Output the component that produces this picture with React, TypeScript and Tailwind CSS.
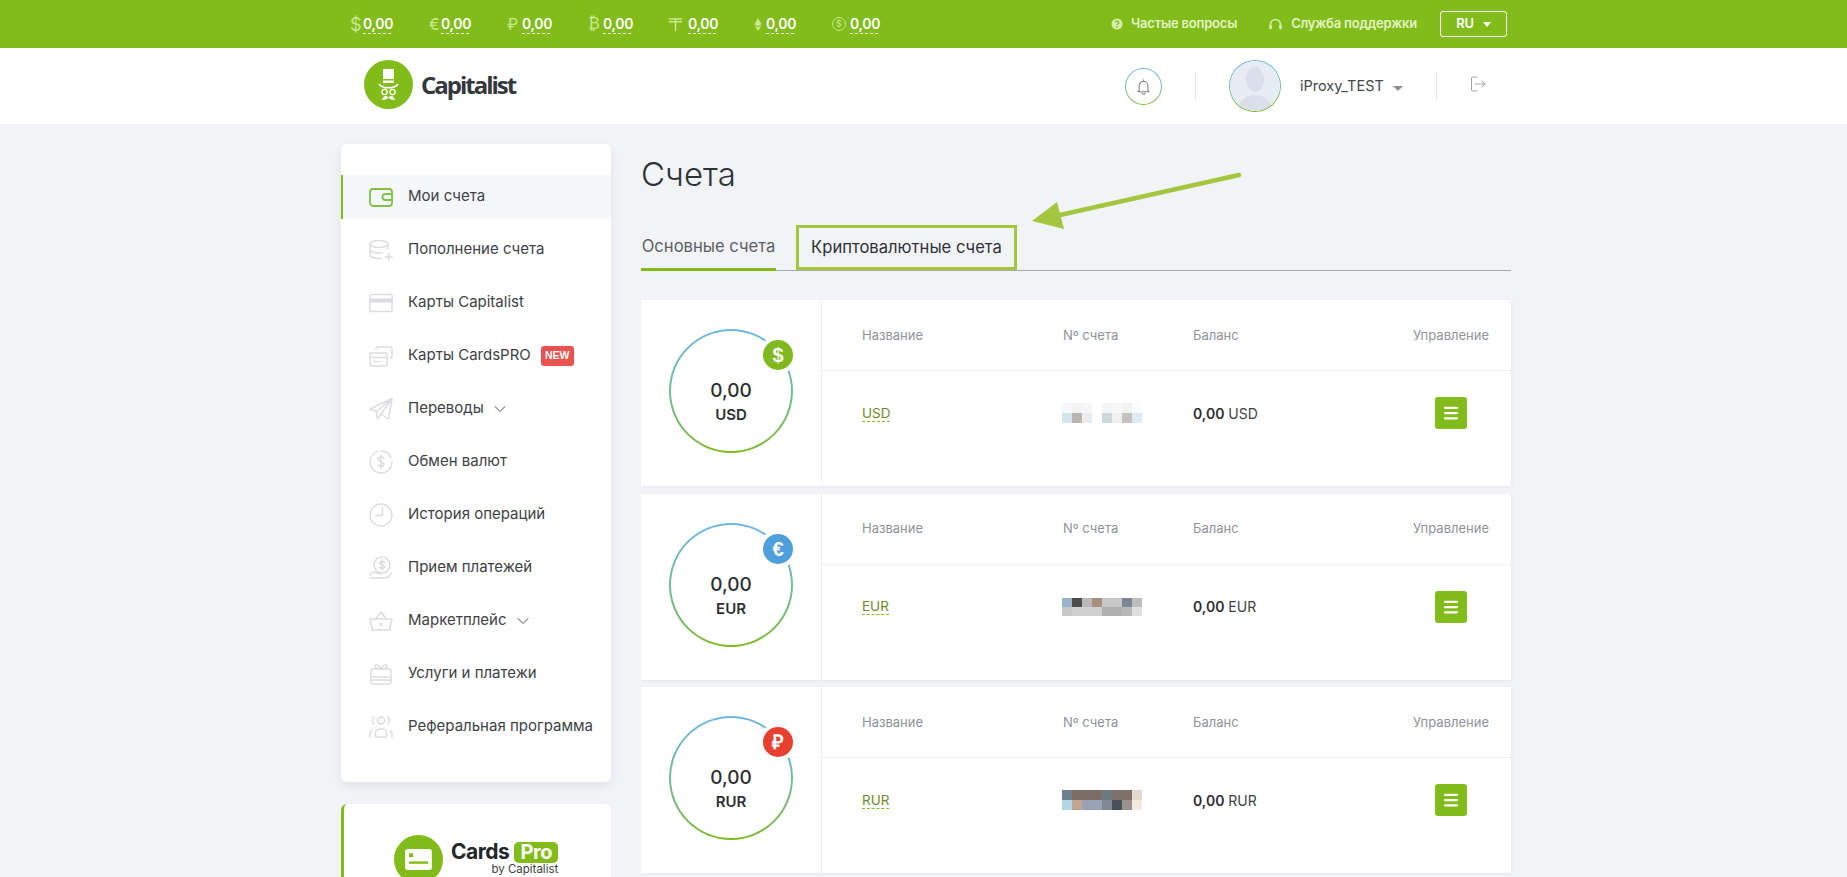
import { ChevronDown, Menu } from 'lucide-react'
import type { ReactNode } from 'react'

function Svg({ children, className }: { children: ReactNode; className?: string }) {
  return (
    <svg viewBox="0 0 24 24" fill="none" stroke="currentColor" strokeWidth="1.5" strokeLinecap="round" strokeLinejoin="round" className={className}>
      {children}
    </svg>
  )
}

const topCurrencies: { glyph: ReactNode; box: string; gap: string }[] = [
  { glyph: <span className="text-[18px] font-normal">$</span>, box: 'w-[13px]', gap: 'mr-[38px]' },
  { glyph: <span className="text-[16px] font-normal">€</span>, box: 'w-[12px]', gap: 'mr-[38px]' },
  { glyph: <span className="text-[16px] font-normal">₽</span>, box: 'w-[15px]', gap: 'mr-[38px]' },
  { glyph: <span className="text-[16px] font-normal font-['DejaVu_Sans',sans-serif]">₿</span>, box: 'w-[15px]', gap: 'mr-[37px]' },
  {
    glyph: (
      <svg viewBox="0 0 16 16" className="w-[15px] h-[15px]" fill="none" stroke="currentColor" strokeWidth="1.6">
        <path d="M1 2h14M1 5h14M8 2v13" />
      </svg>
    ),
    box: 'w-[20px]',
    gap: 'mr-[38px]',
  },
  {
    glyph: (
      <svg viewBox="0 0 10 16" className="w-[8px] h-[15px]" fill="currentColor">
        <path d="M5 0 9.500 7.600 5 10.200 .5 7.600zM5 11.400l4.500-2.600L5 16 .5 8.800z" />
      </svg>
    ),
    box: 'w-[12px]',
    gap: 'mr-[38px]',
  },
  {
    glyph: (
      <span className="flex items-center justify-center w-[14px] h-[14px] rounded-full border border-[#c9e88f] text-[9px] font-normal">$</span>
    ),
    box: 'w-[18px]',
    gap: '',
  },
]

function TopBar() {
  return (
    <div className="h-12 shrink-0 bg-[#82bc1a] flex items-center pl-[350px] pr-[340px] text-white">
      <div className="flex items-center">
        {topCurrencies.map((c, i) => (
          <div key={i} className={`flex items-center ${c.gap}`}>
            <span className={`${c.box} flex items-center text-[#c9e88f]`}>{c.glyph}</span>
            <span className="text-[14px] font-semibold leading-[18px] border-b border-dashed border-white/90 w-[28px] tracking-[-0.3px] whitespace-nowrap">0,00</span>
          </div>
        ))}
      </div>
      <div className="ml-auto flex items-center text-[13px] font-semibold text-[#e4f3c6] tracking-[-0.2px]">
        <svg viewBox="0 0 24 24" className="w-3 h-3 mr-2" fill="#d5eeaa">
          <path d="M12 1a11 11 0 1 0 0 22 11 11 0 0 0 0-22zm1.400 18h-3v-3h3zm2.900-7.700c-.9.800-2.300 1.500-2.600 2.700h-3c.2-2.600 3.400-3.200 3.600-5 .1-1-.7-1.600-1.600-1.600-1 0-1.700.7-1.900 1.700L8 8.600C8.500 6.400 10.200 5 12.400 5c2.300 0 4.500 1.400 4.500 3.900 0 1-.2 1.700-.6 2.400z" />
        </svg>
        <span>Частые вопросы</span>
        <Svg className="w-[15px] h-[15px] ml-[31px] mr-2 text-[#d5eeaa]">
          <path d="M4 15v-3a8 8 0 0 1 16 0v3" strokeWidth="2.400" />
          <rect x="2.500" y="13" width="3" height="6" rx="1" fill="currentColor" />
          <rect x="18.500" y="13" width="3" height="6" rx="1" fill="currentColor" />
        </Svg>
        <span>Служба поддержки</span>
        <button className="ml-[23px] w-[67px] h-[26px] border border-white rounded-[3px] flex items-center justify-center gap-[9px] text-[13px] font-semibold text-white">
          RU
          <span className="w-0 h-0 border-x-[4.5px] border-x-transparent border-t-[5px] border-t-white" />
        </button>
      </div>
    </div>
  )
}

function Ring({ className, children }: { className: string; children: ReactNode }) {
  return (
    <div className={`rounded-full bg-gradient-to-b from-[#6fb6e6] to-[#7fba1f] ${className}`}>
      <div className="w-full h-full rounded-full bg-white flex items-center justify-center overflow-hidden">{children}</div>
    </div>
  )
}

function Header() {
  return (
    <div className="h-[76px] shrink-0 bg-white flex items-center pl-[364px] pr-[361px]">
      <div className="w-[49px] h-[49px] -mt-[3px] rounded-full bg-[#82bc1a] flex items-center justify-center">
        <svg viewBox="0 0 49 49" className="w-[49px] h-[49px]" fill="none">
          <path d="M19 9h11v10H19zM19 20.500h11V23H19z" fill="#fff" />
          <path d="M15 24c3 5 16 5 19 0" stroke="#fff" strokeWidth="1.600" />
          <circle cx="20.500" cy="32" r="2.600" stroke="#fff" strokeWidth="1.300" />
          <circle cx="28.500" cy="32" r="2.600" stroke="#fff" strokeWidth="1.300" />
          <path d="M24.500 37.500c-1.600 2.300-5 2.600-7.500 2 2.500-.6 2-3.600 4.500-3.600 1.400 0 2.300.6 3 1.600 .7-1 1.600-1.600 3-1.600 2.500 0 2 3 4.500 3.600-2.500.6-5.900.3-7.500-2z" fill="#fff" />
        </svg>
      </div>
      <span className="ml-2 -mt-[3px] text-[24px] font-bold text-[#34383d] tracking-[-2px] font-['Open_Sans',sans-serif]">Capitalist</span>

      <Ring className="ml-auto w-[37px] h-[37px] p-px">
        <Svg className="w-[19px] h-[19px] text-[#7a8087]">
          <path d="M6.500 17V11a5.500 5.500 0 0 1 11 0v6l1.500 1.500H5zM12 3.500v2M10 20.500a2.200 2.200 0 0 0 4 0" strokeWidth="1.300" />
        </Svg>
      </Ring>
      <div className="w-px h-7 bg-[#e3e5e8] ml-[33px] mr-[33px]" />
      <Ring className="w-[52px] h-[52px] p-px">
        <div className="w-full h-full rounded-full bg-[#e7edf4] overflow-hidden">
          <svg viewBox="0 0 52 52" className="w-full h-full" fill="#d9e0e9">
            <ellipse cx="26" cy="19" rx="9.500" ry="13" />
            <path d="M8 52c1-10 7-14 13-16h10c6 2 12 6 13 16z" />
          </svg>
        </div>
      </Ring>
      <span className="ml-[19px] text-[14.5px] text-[#44484d] w-[83px] whitespace-nowrap">iProxy_TEST</span>
      <span className="ml-[10px] w-0 h-0 border-x-[5px] border-x-transparent border-t-[5px] border-t-[#8b8f94] mt-1" />
      <div className="w-px h-7 bg-[#e3e5e8] ml-[33px] mr-[33px]" />
      <svg viewBox="0 0 16 16" className="w-4 h-4 -mt-1 text-[#9ca1a7]" fill="none" stroke="currentColor" strokeWidth="1">
        <path d="M7 1H2.500A1 1 0 0 0 1.500 2v12a1 1 0 0 0 1 1H7M5.500 8H15M12 5l3 3-3 3" strokeLinecap="round" strokeLinejoin="round" />
      </svg>
    </div>
  )
}

const sideIcons: Record<string, ReactNode> = {
  wallet: (
    <>
      <path d="M4 4h16a3 3 0 0 1 3 3v11a3 3 0 0 1-3 3H4a3 3 0 0 1-3-3V7a3 3 0 0 1 3-3z" strokeWidth="1.800" />
      <path d="M23 9h-6.500a3 3 0 0 0 0 6H23" strokeWidth="1.800" />
    </>
  ),
  deposit: (
    <>
      <ellipse cx="10" cy="6" rx="9" ry="3.500" />
      <path d="M1 6v11c0 1.900 4 3.500 9 3.500h2M1 11.500c0 1.900 4 3.500 9 3.500h3M19 6v5M19.500 15.500v7M16 19h7" />
    </>
  ),
  card: (
    <>
      <rect x="1" y="3.500" width="22" height="17" rx="1" />
      <path d="M1 9.500h22" strokeWidth="4" />
    </>
  ),
  cardsPro: (
    <>
      <rect x="1" y="9" width="17" height="13" rx="2" />
      <path d="M1 13.500h17M5 17.500h3M10 17.500h2" />
      <path d="M7 5.500V4.500A1.500 1.500 0 0 1 8.500 3H21.500A1.500 1.500 0 0 1 23 4.500V13a1.500 1.500 0 0 1-1.500 1.500" />
    </>
  ),
  send: <path d="M23 1.500 1 12l6.500 2.500L23 1.500zM23 1.500 19.500 22l-7.500-5-3.500 5-1-7.500M12 17 23 1.500" />,
  exchange: (
    <>
      <path d="M12 1a11 11 0 0 1 10 6.500M23 12a11 11 0 0 1-11 11A11 11 0 0 1 1 12 11 11 0 0 1 8.500 1.600" />
      <path d="M15 8.500c-.5-1-1.600-1.500-3-1.500-1.700 0-3 .9-3 2.300 0 3 6 1.800 6 5 0 1.400-1.400 2.200-3 2.200-1.300 0-2.500-.6-3-1.600M12 5.500v13" />
    </>
  ),
  history: (
    <>
      <circle cx="12" cy="12" r="11" />
      <path d="M13.500 4.500v8H6.500" />
    </>
  ),
  receive: (
    <>
      <circle cx="13" cy="9" r="8" />
      <path d="M15.500 6.500c-.4-.7-1.200-1-2.500-1-1.300 0-2.300.7-2.300 1.700 0 2.200 4.800 1.300 4.800 3.600 0 1-1.100 1.700-2.500 1.700-1.100 0-2.100-.4-2.500-1.200M13 3.500v11" />
      <path d="M1 19c2-3 4-3.500 6-2.500 2 .8 3 1 5 1.500M1 22h14c3 0 6-2 7-5" />
    </>
  ),
  basket: (
    <>
      <path d="M1 10h22l-2.500 11h-17zM6.500 10 12 3l5.500 7" />
      <circle cx="12" cy="15.500" r="1" fill="currentColor" />
    </>
  ),
  gift: (
    <>
      <rect x="2" y="7" width="20" height="15" rx="1.500" />
      <path d="M2 15h20M2 18h20M12 7c-2-4-5-5-6-3.500S7 7 12 7zm0 0c2-4 5-5 6-3.500S17 7 12 7z" />
    </>
  ),
  referral: (
    <>
      <circle cx="12" cy="5.500" r="3.500" />
      <path d="M5 2a5 5 0 0 0 0 7M19 2a5 5 0 0 1 0 7M6.500 22v-4a4 4 0 0 1 4-4h3a4 4 0 0 1 4 4v4zM1 22v-3a4 4 0 0 1 2-3.500M23 22v-3a4 4 0 0 0-2-3.500" />
    </>
  ),
}

const menu = [
  { icon: 'wallet', label: 'Мои счета', active: true },
  { icon: 'deposit', label: 'Пополнение счета' },
  { icon: 'card', label: 'Карты Capitalist' },
  { icon: 'cardsPro', label: 'Карты CardsPRO', badge: true },
  { icon: 'send', label: 'Переводы', chevron: true },
  { icon: 'exchange', label: 'Обмен валют' },
  { icon: 'history', label: 'История операций' },
  { icon: 'receive', label: 'Прием платежей' },
  { icon: 'basket', label: 'Маркетплейс', chevron: true },
  { icon: 'gift', label: 'Услуги и платежи' },
  { icon: 'referral', label: 'Реферальная программа' },
]

function Sidebar() {
  return (
    <div className="w-[270px] shrink-0">
      <div className="h-[638px] bg-white rounded-md shadow-[0_4px_10px_rgba(40,50,70,0.08)] pt-[26px]">
        {menu.map(m => (
          <div key={m.label} className="h-[53px] flex items-center">
            <div className={`w-full h-[44px] flex items-center pl-[26px] border-l-2 ${m.active ? 'bg-[#f6f7fa] border-[#82bc1a]' : 'border-transparent'}`}>
              <Svg className={`w-[24px] h-[24px] shrink-0 ${m.active ? 'text-[#7fc241]' : 'text-[#dcdde0]'}`}>{sideIcons[m.icon]}</Svg>
              <span className="ml-[15px] text-[15px] text-[#3e4246] whitespace-nowrap">{m.label}</span>
              {m.badge && (
                <span className="ml-[10px] w-[33px] h-5 rounded-[3px] bg-[#e8534f] text-white text-[10.5px] font-bold flex items-center justify-center font-['Liberation_Sans',sans-serif]">NEW</span>
              )}
              {m.chevron && <ChevronDown className="ml-[6px] w-[20px] h-[20px] text-[#4a4e52]" strokeWidth={1.2} />}
            </div>
          </div>
        ))}
      </div>
      <div className="mt-[22px] h-[120px] bg-white rounded-md border-l-[3px] border-[#82bc1a] flex pl-[50px] pt-[31px]">
        <div className="w-[49px] h-[49px] rounded-full bg-[#82bc1a] flex items-center justify-center shrink-0">
          <svg viewBox="0 0 28 22" className="w-[27px] h-[21px]">
            <rect width="28" height="22" rx="3" fill="#fff" />
            <rect x="4" y="4.500" width="4.500" height="4" fill="#82bc1a" />
            <rect x="4" y="13" width="20" height="2.500" fill="#82bc1a" />
          </svg>
        </div>
        <div className="ml-2 mt-[5px]">
          <div className="flex items-center">
            <span className="text-[21px] leading-6 font-bold text-[#22262b] tracking-[-0.5px]">Cards</span>
            <span className="ml-[5px] h-[21px] w-[44px] rounded-[5px] bg-[#82bc1a] text-white text-[20px] font-bold flex items-center justify-center tracking-[-0.5px]">Pro</span>
          </div>
          <div className="text-[11.5px] text-[#3a3e43] text-right leading-[13px] -mt-[1px]">by Capitalist</div>
        </div>
      </div>
    </div>
  )
}

type Account = { code: string; color: string; glyph: string; mosaic: string[][]; cell: string }

const accounts: Account[] = [
  {
    code: 'USD',
    color: 'bg-[#7fb91f]',
    glyph: '$',
    cell: 'w-[10px] h-[10px]',
    mosaic: [
      ['#f5f8fa', '#f3f3f3', '#f6f6f6', '#ffffff', '#f4f5f6', '#f7f7f7', '#f3f3f2', '#fafcfd'],
      ['#d3e6f0', '#b9b6b0', '#ececec', '#ffffff', '#cfd8dc', '#f0f0f0', '#c6c3be', '#dcebf5'],
    ],
  },
  {
    code: 'EUR',
    color: 'bg-[#4f9fdc]',
    glyph: '€',
    cell: 'w-[10px] h-[9px]',
    mosaic: [
      ['#9ab3c8', '#4d4d4d', '#b9b9b9', '#a89080', '#c8c8c8', '#c8c8c8', '#7c8793', '#bdbdbd'],
      ['#c8c8c8', '#d0d0d0', '#d0d0d0', '#d0d0d0', '#b0b0b0', '#b0b0b0', '#b8b8b8', '#e0e0e0'],
    ],
  },
  {
    code: 'RUR',
    color: 'bg-[#e8402f]',
    glyph: '₽',
    cell: 'w-[10px] h-[10px]',
    mosaic: [
      ['#6f7f8e', '#7b6e66', '#7b6e66', '#7b6e66', '#6c7a84', '#7d7069', '#7d7069', '#e2d9d0'],
      ['#b0d6e8', '#c2a58e', '#99a3b5', '#99a3b5', '#7d8a92', '#4b5058', '#9a938c', '#f2eadf'],
    ],
  },
]

function AccountCard({ a }: { a: Account }) {
  return (
    <div className="h-[186px] bg-white shadow-[1px_1px_2px_rgba(40,50,70,0.06)] flex">
      <div className="w-[181px] shrink-0 border-r border-[#eceef1] pl-[28px] pt-[29px]">
        <div className="relative w-[124px] h-[124px] rounded-full bg-gradient-to-b from-[#6fb6e6] to-[#7fba1f] p-[2px]">
          <div className="w-full h-full rounded-full bg-white flex flex-col items-center justify-center pt-[24px]">
            <div className="text-[19px] leading-6 font-medium text-[#2c2f33]">0,00</div>
            <div className="text-[15px] leading-6 font-semibold text-[#2c2f33]">{a.code}</div>
          </div>
          <div className={`absolute right-[0px] top-[11px] w-[30px] h-[30px] rounded-full ${a.color} ring-[4px] ring-white text-white font-bold text-[20px] flex items-center justify-center font-['Liberation_Sans',sans-serif]`}>
            {a.glyph}
          </div>
        </div>
      </div>
      <div className="flex-1 flex flex-col">
        <div className="h-[71px] shrink-0 border-b border-[#eceef1] flex items-center text-[13px] text-[#8f9399] pt-[1px]">
          <span className="ml-[40px] w-[201px]">Название</span>
          <span className="w-[130px]">Nº счета</span>
          <span>Баланс</span>
          <span className="ml-auto mr-[22px]">Управление</span>
        </div>
        <div className="flex items-center h-[84px]">
          <span className="ml-[40px] w-[200px] text-[13.5px]">
            <span className="text-[#71892a] border-b border-dashed border-[#8ebb2a] leading-[15px] inline-block">{a.code}</span>
          </span>
          <div className="w-[131px] shrink-0 flex">
            <div className="flex flex-col">
              {a.mosaic.map((row, i) => (
                <div key={i} className="flex">
                  {row.map((c, j) => (
                    <div key={j} className={a.cell} style={{ backgroundColor: c }} />
                  ))}
                </div>
              ))}
            </div>
          </div>
          <span className="text-[14px] text-[#3e4246]"><b className="font-semibold text-[#2c2f33]">0,00</b> {a.code}</span>
          <button className="ml-auto mr-[44px] w-8 h-8 rounded-[3px] bg-[#82bc1a] flex items-center justify-center text-white">
            <Menu className="w-[18px] h-[18px]" strokeWidth={3} />
          </button>
        </div>
      </div>
    </div>
  )
}

function Main() {
  return (
    <div className="w-[870px] ml-[30px] shrink-0">
      <h1 className="text-[33px] leading-[44px] mt-[8px] text-[#2e3236] font-light">Счета</h1>
      <div className="relative mt-[29px] h-[46px] border-b border-[#a9abae] flex">
        <div className="w-[135px] h-[46px] border-b-[3px] border-[#82bc1a] flex items-center justify-center text-[16.6px] text-[#5b5f63] whitespace-nowrap">Основные счета</div>
        <div className="ml-5 w-[221px] h-[45px] border-[3px] border-[#a2c63d] flex items-center justify-center text-[16.6px] text-[#2e3236] whitespace-nowrap">Криптовалютные счета</div>
        <svg className="absolute left-[380px] top-[-55px] w-[230px] h-[70px] pointer-events-none" viewBox="0 0 230 70" fill="none">
          <path d="M218 5 30 47" stroke="#a2c63d" strokeWidth="4.500" strokeLinecap="round" />
          <path d="M11 51 36 32 43 59z" fill="#a2c63d" />
        </svg>
      </div>
      <div className="mt-[29px] flex flex-col gap-[7.5px]">
        {accounts.map(a => <AccountCard key={a.code} a={a} />)}
      </div>
    </div>
  )
}

export default function App() {
  return (
    <div className="h-[877px] overflow-hidden bg-[#f1f3f7] flex flex-col font-['Inter','Noto_Sans',sans-serif]">
      <TopBar />
      <Header />
      <div className="flex pl-[341px] pt-5">
        <Sidebar />
        <Main />
      </div>
    </div>
  )
}
